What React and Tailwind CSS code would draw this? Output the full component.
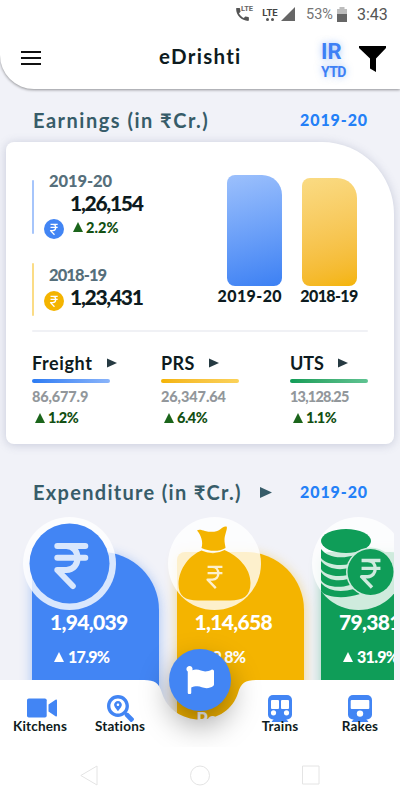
import { FaFlag, FaSearchLocation } from "react-icons/fa";
import { MdCall } from "react-icons/md";

const COLUMNS = [
  { label: "Freight", value: "86,677.9",  change: "1.2%", bar: "from-[#2b7bf3] to-[#8ab4fa]", track: "tracking-[0.6px]", valueTrack: "tracking-[-0.15px]" },
  { label: "PRS",     value: "26,347.64", change: "6.4%", bar: "from-[#f4b400] to-[#fbd259]", track: "tracking-[0.4px]", valueTrack: "tracking-[-0.1px]" },
  { label: "UTS",     value: "13,128.25", change: "1.1%", bar: "from-[#0f9d58] to-[#5fc392]", track: "tracking-[-0.1px]", valueTrack: "tracking-[-0.8px]" },
];

const NAV_LEFT = [
  { label: "Kitchens", icon: KitchenIcon },
  { label: "Stations", icon: StationIcon },
];

const NAV_RIGHT = [
  { label: "Trains", icon: TrainIcon },
  { label: "Rakes", icon: RakeIcon },
];

function KitchenIcon() {
  return (
    <svg width="30" height="20" viewBox="0 0 30 20" fill="#4285f4" className="ml-[3px] -mt-[1px]">
      <rect x="0" y="0.5" width="19.7" height="19" rx="1.8" />
      <path d="M21.5 6.5 28.5 1.8q1.5-.8 1.5.8v14.800q0 1.600-1.500.8L21.500 13.500z" />
    </svg>
  );
}

function StationIcon() {
  return <FaSearchLocation className="w-[27px] h-[27px] text-[#4285f4]" />;
}

function TrainIcon() {
  return (
    <svg width="24" height="27" viewBox="0 0 24 27">
      <rect width="24" height="24.500" rx="5" fill="#4285f4" />
      <path d="M7 22.500h10l3.500 4.500h-17z" fill="#4285f4" />
      <rect x="3" y="5" width="8" height="9" rx="1" fill="#fff" />
      <rect x="13" y="5" width="8" height="9" rx="1" fill="#fff" />
      <circle cx="5.500" cy="17.800" r="2.600" fill="#fff" />
      <circle cx="18.500" cy="17.800" r="2.600" fill="#fff" />
    </svg>
  );
}

function RakeIcon() {
  return (
    <svg width="24" height="27" viewBox="0 0 24 27">
      <rect width="24" height="24.500" rx="5" fill="#4285f4" />
      <path d="M7 22.500h10l3.500 4.500h-17z" fill="#4285f4" />
      <rect x="2.700" y="5" width="18.600" height="9" rx="1" fill="#fff" />
      <circle cx="12" cy="18.600" r="3.200" fill="#fff" />
    </svg>
  );
}

function Up({ className }) {
  return (
    <svg viewBox="0 0 10 10" className={className} fill="currentColor">
      <path d="M5 0 10 10H0z" />
    </svg>
  );
}

function Play({ className }) {
  return (
    <svg viewBox="0 0 11 10" className={className} fill="currentColor">
      <path d="M0 0 11 5 0 10z" />
    </svg>
  );
}

function RupeeMark({ x, y, w, h, stroke, width, cap = "round" }) {
  return (
    <svg x={x} y={y} width={w} height={h} viewBox="0 0 34 46" fill="none" stroke={stroke} strokeWidth={width} strokeLinecap={cap} strokeLinejoin="round" overflow="visible">
      <path d="M3 3H31M3 14.700H31M3 3H12C27 3 27 27 12 27H3L18.500 43" />
    </svg>
  );
}

function Coin({ className }) {
  return (
    <svg viewBox="0 0 20 20" className={className}>
      <circle cx="10" cy="10" r="10" fill="currentColor" />
      <RupeeMark x={5.600} y={4.700} w={9} h={11.800} stroke="#fff" width={5} cap="butt" />
    </svg>
  );
}

function RupeeBadge() {
  return (
    <svg width="93" height="93" viewBox="0 0 93 93">
      <circle cx="46.500" cy="46.500" r="46.500" fill="#fff" opacity="0.8" />
      <circle cx="46.500" cy="46.500" r="40" fill="#4285f4" />
      <RupeeMark x={31.300} y={26} w={34} h={46} stroke="#d9e7fd" width={6} />
    </svg>
  );
}

function BagBadge() {
  return (
    <svg width="93" height="93" viewBox="0 0 93 93">
      <circle cx="46.500" cy="46.500" r="46.500" fill="#fff" opacity="0.8" />
      <path d="M29 13.500C31 12 34 13 37 14C43 15.500 49 15 52 12.500C54 10.500 57 8.500 58.800 9.800C59.500 12 57 17 56.500 22C56.300 26 57.500 29 57.500 31C51 35 41 34.500 33.500 31C35.500 25 33 18 29 13.500z" fill="#f4b400" />
      <path d="M33.500 33.500Q46 39 56.500 33C70 39 82.500 51 82.500 66C82.500 79 75 83.500 62 83.500H30C17 83.500 10.500 79 10.500 67C11 51 22 38 33.500 33.500z" fill="#f4b400" />
      <RupeeMark x={38} y={47.500} w={18} h={26} stroke="#fdf0cc" width={4.500} cap="butt" />
    </svg>
  );
}

function CoinsBadge() {
  return (
    <svg width="93" height="93" viewBox="0 0 93 93">
      <circle cx="46.500" cy="46.500" r="46.500" fill="#fff" opacity="0.8" />
      <g fill="#0f9d58">
        <ellipse cx="34" cy="24" rx="25" ry="12" />
        <path d="M9 32C15 40 28 43 45 37.500L38 47C24 50 13 46 9 41z" />
        <path d="M9 44C15 51 25 54 37 51L36 58C23 61 12 57 9 52z" />
        <path d="M9 55C15 63 25 65 36 62L38 68C25 72 12 69 9 63z" />
        <path d="M9 66C16 74 28 76 42 72L48 77C34 82 14 81 9 74z" />
      </g>
      <circle cx="58.500" cy="55" r="24.500" fill="#cfebde" />
      <circle cx="58.500" cy="55" r="23" fill="#0f9d58" />
      <RupeeMark x={46} y={41.500} w={26} h={31} stroke="#cfebde" width={5} cap="butt" />
    </svg>
  );
}

const EXPENSES = [
  { value: "1,94,039", change: "17.9%", badge: RupeeBadge, card: "bg-[#4285f4] shadow-[0_2px_12px_rgba(66,133,244,0.45)]" },
  { value: "1,14,658", change: "9.8%",  badge: BagBadge,   card: "bg-[#f4b400] shadow-[0_2px_12px_rgba(244,180,0,0.45)]", footer: "Pe" },
  { value: "79,381",   change: "31.9%", badge: CoinsBadge, card: "bg-[#0f9d58] shadow-[0_2px_12px_rgba(15,157,88,0.4)]" },
];

function StatusBar() {
  return (
    <div className="flex items-center h-7 pl-[234px] font-['Roboto'] text-[#757575]">
      <MdCall className="w-[17px] h-[17px] shrink-0 mt-[1px] text-[#555]" />
      <span className="w-[14px] -ml-[10px] -mt-[10px] text-[7.500px] font-bold leading-none text-[#666]">LTE</span>
      <div className="ml-[6px] w-[18px] flex flex-col items-center text-[#444]">
        <span className="text-[9.500px] font-bold leading-[9px]">LTE</span>
        <div className="flex gap-[2px] mt-[1px]">
          <i className="w-[3px] h-[3px] rounded-full bg-[#555]" />
          <i className="w-[3px] h-[3px] rounded-full bg-[#555]" />
        </div>
      </div>
      <svg width="14" height="14" className="ml-[2px]"><path d="M14 0V14H0z" fill="#666" /></svg>
      <span className="ml-[11px] w-[29px] mt-[1px] text-[14.500px]">53%</span>
      <svg width="10" height="15" className="ml-[2px]">
        <path d="M2.500 0h5v2H10v13H0V2h2.500z" fill="#bdbdbd" />
        <path d="M0 7h10v8H0z" fill="#666" />
      </svg>
      <span className="ml-[10px] mt-[1px] text-[16px] text-[#555]">3:43</span>
    </div>
  );
}

function Header() {
  return (
    <header className="relative z-10 h-[89px] shrink-0 bg-white rounded-bl-[34px] shadow-[0_1px_3px_rgba(0,0,0,0.4)]">
      <StatusBar />
      <div className="flex items-start pl-[21px]">
        <div className="w-5 mt-[23px] space-y-1">
          <div className="h-[2px] bg-[#111]" />
          <div className="h-[2px] bg-[#111]" />
          <div className="h-[2px] bg-[#111]" />
        </div>
        <h1 className="ml-[118px] mt-4 w-[83px] whitespace-nowrap text-[20.500px] leading-6 font-bold tracking-[1.300px] text-[#0d1b20]">eDrishti</h1>
        <div className="ml-[79px] mt-3 w-[38px] font-['Roboto'] font-bold text-[#3d80f5] [text-shadow:0_0_7px_rgba(66,133,244,0.5)]">
          <p className="text-[22px] leading-[23px]">IR</p>
          <p className="text-[14px] leading-[18px] tracking-[-0.6px]">YTD</p>
        </div>
        <svg width="27" height="26" viewBox="0 0 27 26" className="mt-[18px]">
          <path d="M0 0H27V2L17 12.500V26L11 22.500V12.500L0 2z" />
        </svg>
      </div>
    </header>
  );
}

function SectionTitle({ title, arrow, className }) {
  return (
    <div className={`flex items-center h-[22px] pl-[33px] pr-[32px] ${className}`}>
      <h2 className={`w-[208px] whitespace-nowrap text-[20px] leading-[22px] font-bold text-[#375c69] ${arrow ? "tracking-[1.300px]" : "tracking-[1.500px]"}`}>{title}</h2>
      {arrow && <Play className="ml-[19px] w-3 h-[11px] text-[#375c69]" />}
      <span className="ml-auto text-[16px] leading-[22px] font-black tracking-[0.9px] text-[#2480f7]">2019-20</span>
    </div>
  );
}

function EarningsCard() {
  return (
    <section className="mx-[6px] h-[302px] shrink-0 rounded-lg rounded-tr-[72px] bg-white px-[26px] shadow-[0_1px_10px_rgba(100,110,150,0.3)]">
      <div className="flex h-[188px]">
        <div className="w-[186px] pt-[38px]">
          <div className="flex h-[83px]">
            <div className="w-[2px] h-[54px] rounded bg-[#a6c5fb]" />
            <div className="ml-[10px] -mt-[9px]">
              <p className="pl-[5px] text-[16.500px] leading-5 font-black text-[#566f7b] tracking-[-0.1px]">2019-20</p>
              <p className="pl-[26px] text-[21px] leading-6 font-black text-[#0d1b20] tracking-[-1.300px]">1,26,154</p>
              <div className="flex items-center h-[20px] mt-[4px]">
                <Coin className="w-5 h-5 text-[#4285f4]" />
                <Up className="ml-[9px] w-[10px] h-[10px] text-[#1b651b] -mt-1" />
                <span className="ml-[3px] -mt-[3px] text-[14.500px] leading-5 font-black tracking-[0.1px] text-[#124f12]">2.2%</span>
              </div>
            </div>
          </div>
          <div className="flex">
            <div className="w-[2px] h-[53px] rounded bg-[#fbdc86]" />
            <div className="ml-[10px] mt-[2px]">
              <p className="pl-[5px] text-[16.500px] leading-5 font-black text-[#566f7b] tracking-[-0.9px]">2018-19</p>
              <div className="flex items-start">
                <Coin className="mt-[6px] w-5 h-5 text-[#f4b400]" />
                <p className="ml-[6px] text-[21px] leading-6 font-black text-[#0d1b20] tracking-[-1.300px]">1,23,431</p>
              </div>
            </div>
          </div>
        </div>
        <div className="flex items-end gap-[19px] pb-[24px]">
          <div className="w-[64px] flex flex-col items-end">
            <div className="w-[55px] h-[111px] rounded-lg rounded-tr-[20px] bg-linear-165 from-[#9cc0fc] to-[#3c80f3]" />
            <p className="leading-5 text-[16px] font-black text-[#0d1b20] tracking-[0.4px] whitespace-nowrap">2019-20</p>
          </div>
          <div className="w-[56px] flex flex-col items-center">
            <div className="w-[55px] h-[108px] rounded-lg rounded-tr-[20px] bg-linear-165 from-[#fadb83] to-[#f4b400]" />
            <p className="leading-5 text-[16px] font-black text-[#0d1b20] tracking-[-0.6px] whitespace-nowrap">2018-19</p>
          </div>
        </div>
      </div>
      <div className="h-[2px] rounded bg-[#f0f1f5]" />
      <div className="grid grid-cols-[78px_78px_78px] gap-[51px] pt-[20px]">
        {COLUMNS.map(({ label, value, change, bar, track, valueTrack }) => (
          <div key={label}>
            <div className="flex items-center h-[22px]">
              <span className={`mr-auto text-[18px] leading-5 font-bold text-[#0d1b20] ${track}`}>{label}</span>
              <Play className={label === "Freight" ? "w-[10px] h-[10px] mr-[-7px] text-[#263a42]" : "w-[10px] h-[10px] mr-5 text-[#263a42]"} />
            </div>
            <div className={`mt-[5px] h-1 rounded bg-linear-to-r ${bar}`} />
            <p className={`mt-[5px] leading-[18px] text-[14.500px] font-black text-[#92979b] ${valueTrack}`}>{value}</p>
            <div className="flex items-center mt-[3px] pl-[3px]">
              <Up className="w-[10px] h-[10px] text-[#1b651b]" />
              <span className="ml-[3px] leading-[18px] text-[14.500px] font-black text-[#124f12] tracking-[-0.5px]">{change}</span>
            </div>
          </div>
        ))}
      </div>
    </section>
  );
}

function ExpenseCard({ value, change, badge: Badge, card, footer }) {
  return (
    <div className={`w-[127px] h-[190px] shrink-0 rounded-tl-lg rounded-tr-[58px] text-white ${card}`}>
      <div className="-ml-[9px] -mt-[35px] w-[93px] h-[93px]">
        <Badge />
      </div>
      <p className="pl-[18px] text-[21px] leading-6 font-black tracking-[-0.7px]">{value}</p>
      <div className="flex items-center mt-[13px] pl-[22px]">
        <Up className="w-[10px] h-[10px]" />
        <span className="ml-1 text-[16px] leading-5 font-black tracking-[-0.7px]">{change}</span>
      </div>
      {footer && <p className="mt-[40px] pl-5 text-[18px] leading-6 font-black">{footer}</p>}
    </div>
  );
}

function NavItem({ label, icon: Icon }) {
  return (
    <div className="flex flex-col items-center w-[80px]">
      <div className="flex items-center justify-center h-7 mt-[14px]">
        <Icon />
      </div>
      <span className="relative -mt-[4px] text-[13.500px] leading-4 font-bold tracking-[0.2px] text-[#0d1b20]">{label}</span>
    </div>
  );
}

function BottomNav() {
  return (
    <nav className="absolute bottom-0 left-0 w-full">
      <div className="relative h-[67px] overflow-x-clip">
        <div className="flex h-full">
          <div className="w-[140px] bg-white" />
          <svg width="120" height="67" viewBox="0 0 120 67" fill="#fff">
            <path d="M0 0H4C15 0 19 3 22 13C27 29 42 39.500 60 39.500S93 29 98 13C101 3 105 0 116 0H120V67H0z" />
          </svg>
          <div className="w-[140px] bg-white" />
        </div>
        <div className="absolute left-[169px] -top-[31px] w-[62px] h-[62px] rounded-full bg-[#4285f4] shadow-[0_14px_30px_rgba(0,0,0,0.36)] flex items-center justify-center">
          <FaFlag className="w-[28px] h-[28px] text-white" />
        </div>
        <div className="absolute inset-0 flex justify-between">
          <div className="flex">{NAV_LEFT.map((item) => <NavItem key={item.label} {...item} />)}</div>
          <div className="flex">{NAV_RIGHT.map((item) => <NavItem key={item.label} {...item} />)}</div>
        </div>
      </div>
      <div className="relative flex h-[53px] bg-white pl-20 pt-[18px]">
        <svg width="240" height="22" fill="none" stroke="#e4e4e4" strokeWidth="1">
          <path d="M17 1V20L.8 10.500zM222.500 1H239V19H222.500z" />
          <circle cx="120" cy="10.500" r="9.500" />
        </svg>
      </div>
    </nav>
  );
}

export default function App() {
  return (
    <div className="relative flex flex-col w-[400px] h-[800px] overflow-hidden bg-[#f1f2f8] font-['Lato','Noto_Sans',sans-serif]">
      <Header />
      <SectionTitle title="Earnings (in ₹Cr.)" className="mt-5 mb-[11px]" />
      <EarningsCard />
      <SectionTitle title="Expenditure (in ₹Cr.)" arrow className="mt-[37px]" />
      <div className="flex gap-[17.500px] w-[394px] h-[297px] pl-8 pt-[49px] overflow-hidden">
        {EXPENSES.map((item) => <ExpenseCard key={item.value} {...item} />)}
      </div>
      <BottomNav />
    </div>
  );
}
